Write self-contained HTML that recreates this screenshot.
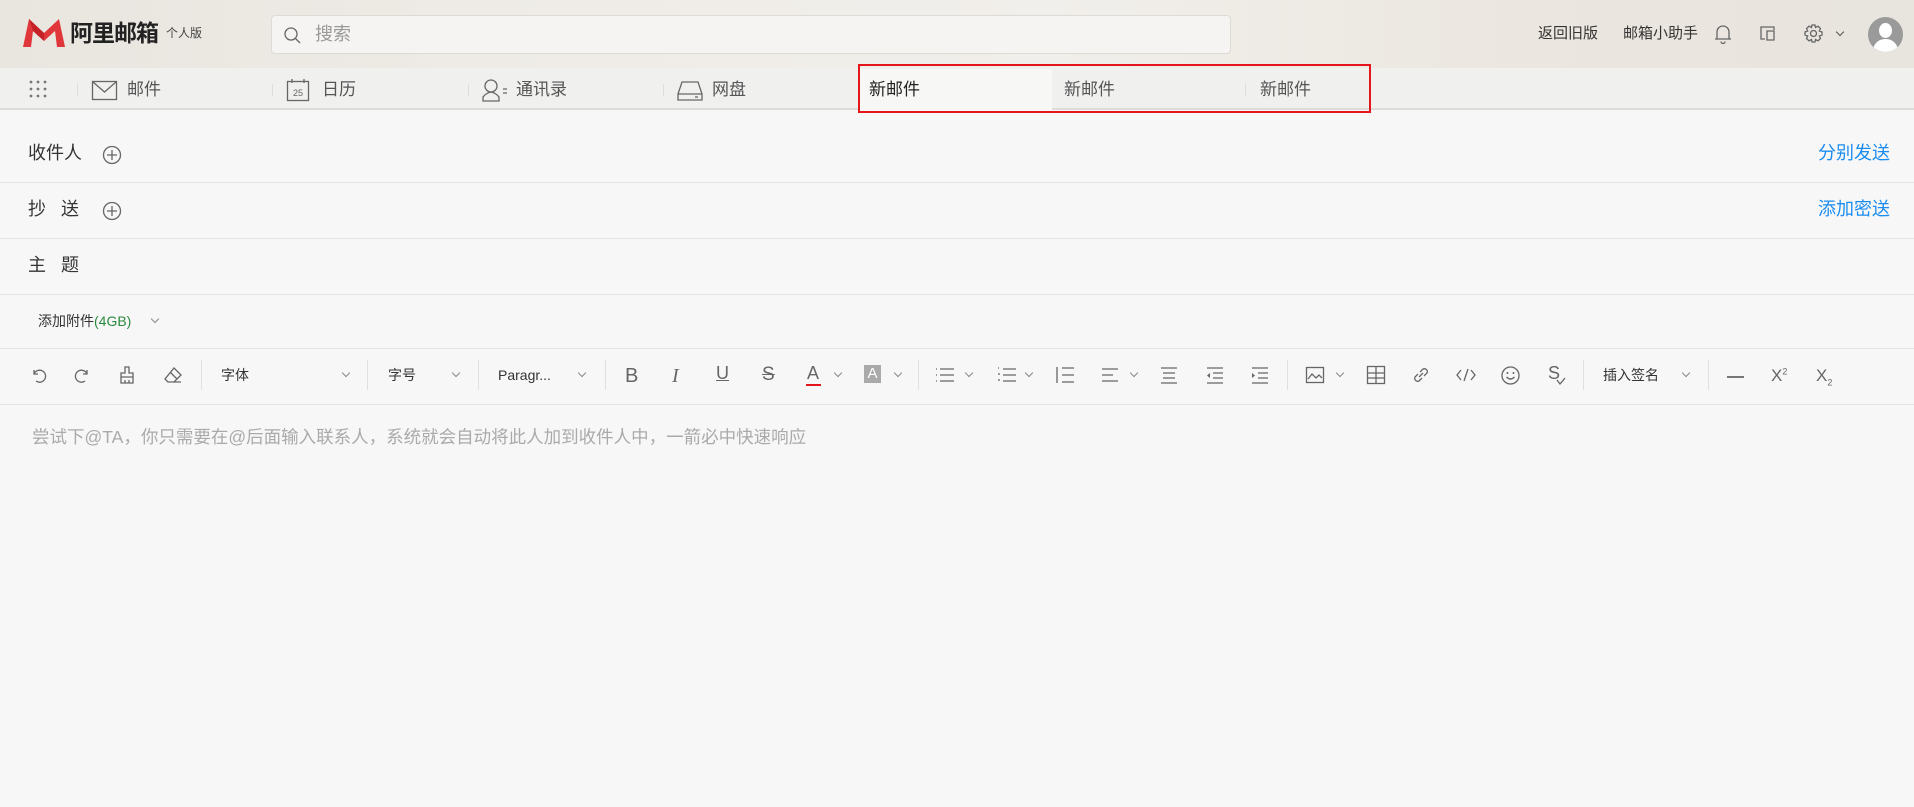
<!DOCTYPE html>
<html><head><meta charset="utf-8">
<style>
*{margin:0;padding:0;box-sizing:border-box}
body{width:1914px;height:807px;overflow:hidden;background:#f7f7f7;font-family:"Liberation Sans","Noto Sans CJK SC",sans-serif;position:relative;color:#333}
.a{position:absolute}
.hdr{left:0;top:0;width:1914px;height:68px;background:linear-gradient(90deg,#e9e5df 0%,#efece7 30%,#f1efeb 55%,#ebe6df 80%,#e8e4de 100%)}
.nav{left:0;top:68px;width:1914px;height:42px;background:#f0f0ef;border-bottom:2px solid #dcdcdc}
.t{white-space:nowrap;line-height:1}
.sep{width:1px;background:#ddd}
.line{left:0;width:1914px;height:1px;background:#e3e3e3}
svg{position:absolute;overflow:visible}
.ic{stroke:#666;fill:none;stroke-width:1.3}
.tb{font-size:14px;color:#333;top:368px}
.ch{width:6px;height:6px;border-right:1.2px solid #888;border-bottom:1.2px solid #888;transform:rotate(45deg);top:370px}
.tsep{top:360px;height:30px;width:1px;background:#e0e0e0}
</style></head><body>
<div class="a hdr"></div>
<svg style="left:23px;top:19px" width="42" height="29" viewBox="0 0 42 29"><path d="M0 28 L6 0 L21 14 L36 0 L42 28 L34 28 L32 12 L21 22 L10 12 L8 28Z" fill="#e0373a"/><path d="M6 0 L21 14 L21 22 L10 12Z" fill="#c42227"/></svg>
<div class="a t" style="left:70px;top:22px;font-size:23px;font-weight:bold;color:#222;letter-spacing:-1px">阿里邮箱</div>
<div class="a t" style="left:166px;top:27px;font-size:12px;color:#444">个人版</div>
<div class="a" style="left:271px;top:15px;width:960px;height:39px;background:#f5f4f2;border:1px solid #dedbd6;border-radius:4px"></div>
<svg style="left:284px;top:27px" width="18" height="18"><circle cx="7" cy="7" r="6" class="ic" stroke="#888"/><path d="M11.5 11.5 L16 16" class="ic" stroke="#888"/></svg>
<div class="a t" style="left:315px;top:25px;font-size:18px;color:#999">搜索</div>
<div class="a t" style="left:1538px;top:26px;font-size:15px;color:#333">返回旧版</div>
<div class="a t" style="left:1623px;top:26px;font-size:15px;color:#333">邮箱小助手</div>
<svg style="left:1714px;top:24px" width="18" height="20"><path d="M3 15 L3 8 A6 6 0 0 1 15 8 L15 15 M1 15 L17 15 M7 17.5 A2 2 0 0 0 11 17.5" class="ic" stroke="#333" stroke-width="1.5"/></svg>
<svg style="left:1759px;top:25px" width="20" height="18"><path d="M6 14 L2 14 L2 2 L15 2 L15 5 M8 6 L15 6 L15 15 L8 15Z" class="ic" stroke="#333" stroke-width="1.5"/></svg>
<svg style="left:1804px;top:24px" width="19" height="19"><circle cx="9.5" cy="9.5" r="3" class="ic" stroke="#333" stroke-width="1.5"/><path d="M8 1 L11 1 L11.5 3.5 L14 2.2 L16.5 4.5 L15.3 7 L18 8 L18 11 L15.3 12 L16.5 14.5 L14 16.8 L11.5 15.5 L11 18 L8 18 L7.5 15.5 L5 16.8 L2.5 14.5 L3.7 12 L1 11 L1 8 L3.7 7 L2.5 4.5 L5 2.2 L7.5 3.5Z" class="ic" stroke="#333" stroke-width="1.4"/></svg>
<div class="a" style="left:1837px;top:29px;width:6px;height:6px;border-right:1.2px solid #555;border-bottom:1.2px solid #555;transform:rotate(45deg)"></div>
<div class="a" style="left:1868px;top:17px;width:35px;height:35px;border-radius:50%;background:#9a9a9a;overflow:hidden">
<div class="a" style="left:11px;top:6px;width:13px;height:15px;border-radius:50%;background:#fff"></div>
<div class="a" style="left:5px;top:22px;width:25px;height:16px;border-radius:12px 12px 0 0;background:#fff"></div></div>
<div class="a nav"></div>
<svg style="left:29px;top:80px" width="18" height="18"><g fill="#777"><circle cx="2" cy="2" r="1.4"/><circle cx="9" cy="2" r="1.4"/><circle cx="16" cy="2" r="1.4"/><circle cx="2" cy="9" r="1.4"/><circle cx="9" cy="9" r="1.4"/><circle cx="16" cy="9" r="1.4"/><circle cx="2" cy="16" r="1.4"/><circle cx="9" cy="16" r="1.4"/><circle cx="16" cy="16" r="1.4"/></g></svg>
<div class="a sep" style="left:77px;top:84px;height:12px"></div>
<div class="a sep" style="left:272px;top:84px;height:12px"></div>
<div class="a sep" style="left:468px;top:84px;height:12px"></div>
<div class="a sep" style="left:663px;top:84px;height:12px"></div>
<svg style="left:92px;top:81px" width="25" height="20"><rect x="0.5" y="0.5" width="24" height="18" class="ic"/><path d="M1 1 L12.5 11 L24 1" class="ic"/></svg>
<div class="a t" style="left:127px;top:81px;font-size:17px;color:#555">邮件</div>
<svg style="left:287px;top:78px" width="22" height="24"><rect x="0.5" y="3.5" width="21" height="19" class="ic"/><path d="M5 1 L5 5 M17 1 L17 5" class="ic"/><text x="11" y="18" font-size="9" text-anchor="middle" fill="#666" font-family="Liberation Sans">25</text></svg>
<div class="a t" style="left:322px;top:81px;font-size:17px;color:#555">日历</div>
<svg style="left:482px;top:79px" width="28" height="24"><circle cx="9" cy="7" r="6" class="ic"/><path d="M1 22 L1 18 Q4 14 9 13 Q14 14 17 18 L17 22Z" class="ic"/><path d="M21 10 L25 10 M21 14 L25 14" class="ic"/></svg>
<div class="a t" style="left:516px;top:81px;font-size:17px;color:#555">通讯录</div>
<svg style="left:677px;top:81px" width="26" height="20"><path d="M1 13 L5 1 L21 1 L25 13 L25 19 L1 19Z M1 13 L25 13" class="ic"/><path d="M18 16 L21 16" class="ic"/></svg>
<div class="a t" style="left:712px;top:81px;font-size:17px;color:#555">网盘</div>
<div class="a" style="left:858px;top:69px;width:194px;height:41px;background:#f7f7f6"></div>
<div class="a sep" style="left:1245px;top:84px;height:12px"></div>
<div class="a t" style="left:869px;top:81px;font-size:17px;color:#222">新邮件</div>
<div class="a t" style="left:1064px;top:81px;font-size:17px;color:#555">新邮件</div>
<div class="a t" style="left:1260px;top:81px;font-size:17px;color:#555">新邮件</div>
<div class="a" style="left:858px;top:64px;width:513px;height:49px;border:2px solid #e5161b"></div>
<div class="a t" style="left:28px;top:144px;font-size:18px">收件人</div>
<div class="a t" style="left:28px;top:200px;font-size:18px">抄&nbsp;&nbsp;&nbsp;送</div>
<div class="a t" style="left:28px;top:256px;font-size:18px">主&nbsp;&nbsp;&nbsp;题</div>
<svg style="left:102px;top:145px" width="20" height="20"><circle cx="10" cy="10" r="8.5" class="ic" stroke="#777"/><path d="M5 10 L15 10 M10 5 L10 15" class="ic" stroke="#777"/></svg>
<svg style="left:102px;top:201px" width="20" height="20"><circle cx="10" cy="10" r="8.5" class="ic" stroke="#777"/><path d="M5 10 L15 10 M10 5 L10 15" class="ic" stroke="#777"/></svg>
<div class="a t" style="left:1818px;top:144px;font-size:18px;color:#1a8cf0">分别发送</div>
<div class="a t" style="left:1818px;top:200px;font-size:18px;color:#1a8cf0">添加密送</div>
<div class="a line" style="top:182px"></div>
<div class="a line" style="top:238px"></div>
<div class="a line" style="top:294px"></div>
<div class="a t" style="left:38px;top:314px;font-size:14px;color:#333">添加附件<span style="color:#2b8a3e">(4GB)</span></div>
<div class="a" style="left:152px;top:316px;width:6px;height:6px;border-right:1.2px solid #888;border-bottom:1.2px solid #888;transform:rotate(45deg)"></div>
<div class="a line" style="top:348px"></div>
<div class="a line" style="top:404px"></div>
<svg style="left:30px;top:367px" width="16" height="16"><path d="M4 3 L4 7 L8 7 M4 7 A6 6 0 1 1 6 14" class="ic" stroke="#d0d0d0"/></svg>
<svg style="left:75px;top:367px" width="16" height="16"><path d="M12 3 L12 7 L8 7 M12 7 A6 6 0 1 0 10 14" class="ic" stroke="#d0d0d0"/></svg>
<svg style="left:119px;top:366px" width="16" height="18"><path d="M6 1 L10 1 L10 7 L14 7 L14 17 L2 17 L2 7 L6 7Z M2 11 L14 11 M6 14 L6 17 M10 14 L10 17" class="ic"/></svg>
<svg style="left:164px;top:367px" width="18" height="17"><path d="M10 1 L17 8 L10 15 L4 15 L1 12Z M6 5 L13 12 M4 15 L17 15" class="ic"/></svg>
<div class="a tsep" style="left:201px"></div>
<div class="a t tb" style="left:221px">字体</div><div class="a ch" style="left:343px"></div>
<div class="a tsep" style="left:367px"></div>
<div class="a t tb" style="left:388px">字号</div><div class="a ch" style="left:453px"></div>
<div class="a tsep" style="left:478px"></div>
<div class="a t tb" style="left:498px">Paragr...</div><div class="a ch" style="left:579px"></div>
<div class="a tsep" style="left:605px"></div>
<div class="a t" style="left:625px;top:366px;font-size:20px;color:#666">B</div>
<div class="a t" style="left:672px;top:366px;font-size:20px;color:#666;font-style:italic;font-family:'Liberation Serif',serif">I</div>
<div class="a t" style="left:716px;top:364px;font-size:18px;color:#666;text-decoration:underline">U</div>
<div class="a t" style="left:762px;top:365px;font-size:19px;color:#666;text-decoration:line-through">S</div>
<div class="a t" style="left:807px;top:364px;font-size:18px;color:#666">A</div>
<div class="a" style="left:806px;top:384px;width:15px;height:2px;background:#e5161b"></div>
<div class="a ch" style="left:835px"></div>
<div class="a t" style="left:864px;top:365px;width:17px;height:18px;background:#aaa;color:#fff;font-size:15px;text-align:center;line-height:18px">A</div>
<div class="a ch" style="left:895px"></div>
<div class="a tsep" style="left:918px"></div>
<svg style="left:935px;top:367px" width="20" height="16"><path d="M5 2 L19 2 M5 8 L19 8 M5 14 L19 14 M1 2 L2 2 M1 8 L2 8 M1 14 L2 14" class="ic"/></svg>
<div class="a ch" style="left:966px"></div>
<svg style="left:997px;top:367px" width="20" height="16"><path d="M6 2 L19 2 M6 8 L19 8 M6 14 L19 14" class="ic"/><path d="M1 1 L2 1 M1 7 L3 7 M1 13 L3 13" class="ic" stroke-width="1"/></svg>
<div class="a ch" style="left:1026px"></div>
<svg style="left:1055px;top:366px" width="20" height="18"><path d="M2 1 L2 17 M7 2 L19 2 M7 9 L19 9 M7 16 L19 16" class="ic"/></svg>
<svg style="left:1101px;top:367px" width="18" height="16"><path d="M1 2 L17 2 M1 8 L12 8 M1 14 L17 14" class="ic"/></svg>
<div class="a ch" style="left:1131px"></div>
<svg style="left:1160px;top:366px" width="18" height="18"><path d="M1 2 L17 2 M3 7 L15 7 M3 12 L15 12 M1 17 L17 17" class="ic"/></svg>
<svg style="left:1206px;top:366px" width="18" height="18"><path d="M1 2 L17 2 M7 7 L17 7 M7 12 L17 12 M1 17 L17 17" class="ic"/><path d="M1 9.5 L4 7 L4 12Z" fill="#666"/></svg>
<svg style="left:1251px;top:366px" width="18" height="18"><path d="M1 2 L17 2 M7 7 L17 7 M7 12 L17 12 M1 17 L17 17" class="ic"/><path d="M4 9.5 L1 7 L1 12Z" fill="#666"/></svg>
<div class="a tsep" style="left:1287px"></div>
<svg style="left:1306px;top:367px" width="18" height="17"><rect x="0.5" y="0.5" width="17" height="15" class="ic"/><path d="M2 12 L6 7 L10 11 L13 8 L16 11" class="ic"/></svg>
<div class="a ch" style="left:1337px"></div>
<svg style="left:1367px;top:366px" width="18" height="18"><rect x="0.5" y="0.5" width="17" height="17" class="ic"/><path d="M9 1 L9 17 M1 7 L17 7 M1 12 L17 12" class="ic"/></svg>
<svg style="left:1412px;top:366px" width="18" height="18"><path d="M8 6 L11 3 A3 3 0 0 1 15 7 L12 10 M10 12 L7 15 A3 3 0 0 1 3 11 L6 8 M7 11 L11 7" class="ic"/></svg>
<svg style="left:1456px;top:367px" width="20" height="16"><path d="M5 3 L1 8 L5 13 M15 3 L19 8 L15 13 M12 2 L8 14" class="ic"/></svg>
<svg style="left:1501px;top:366px" width="19" height="19"><circle cx="9.5" cy="9.5" r="8.5" class="ic"/><path d="M5.5 11 Q9.5 15 13.5 11" class="ic"/><circle cx="6.5" cy="7" r="1" fill="#666"/><circle cx="12.5" cy="7" r="1" fill="#666"/></svg>
<div class="a t" style="left:1548px;top:364px;font-size:18px;color:#666">S</div>
<svg style="left:1556px;top:377px" width="10" height="8"><path d="M1 3 L4 7 L9 1" class="ic"/></svg>
<div class="a tsep" style="left:1583px"></div>
<div class="a t tb" style="left:1603px">插入签名</div><div class="a ch" style="left:1683px"></div>
<div class="a tsep" style="left:1708px"></div>
<div class="a" style="left:1727px;top:376px;width:17px;height:1.5px;background:#777"></div>
<div class="a t" style="left:1771px;top:367px;font-size:17px;color:#666">X<sup style="font-size:9px">2</sup></div>
<div class="a t" style="left:1816px;top:367px;font-size:17px;color:#666">X<sub style="font-size:9px">2</sub></div>
<div class="a t" style="left:32px;top:429px;font-size:17.5px;color:#aaa">尝试下@TA，你只需要在@后面输入联系人，系统就会自动将此人加到收件人中，一箭必中快速响应</div>
</body></html>
